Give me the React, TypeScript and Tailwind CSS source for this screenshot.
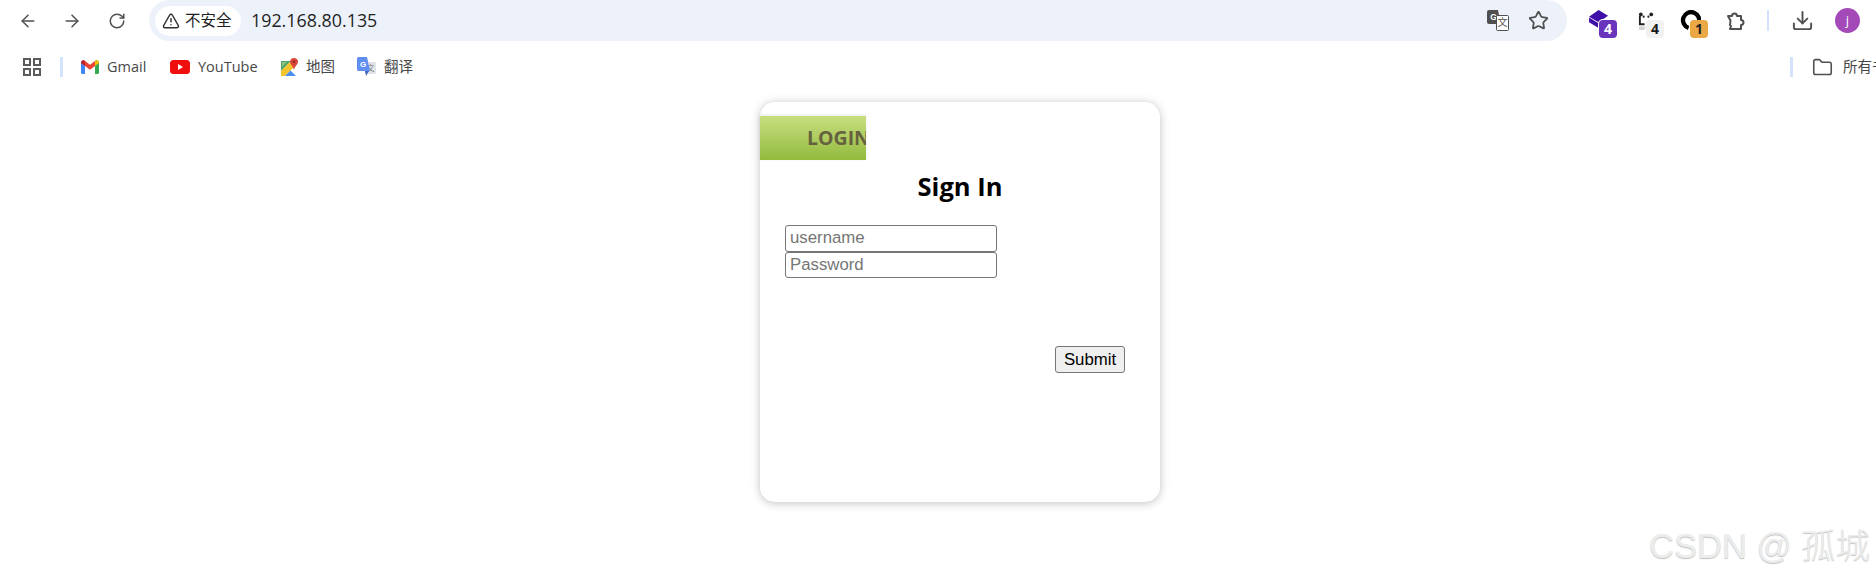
import { ArrowLeft, ArrowRight, Download, Folder, RotateCw, Star, TriangleAlert } from 'lucide-react';

const uiFont = "font-['Open_Sans','Noto_Sans_CJK_SC',sans-serif]";

function AppsIcon() {
  return (
    <svg width="18" height="18" viewBox="0 0 18 18" fill="none" stroke="#5b5b5b" strokeWidth="2">
      <rect x="1" y="1" width="6" height="6" />
      <rect x="11" y="1" width="6" height="6" />
      <rect x="1" y="11" width="6" height="6" />
      <rect x="11" y="11" width="6" height="6" />
    </svg>
  );
}

function GmailIcon() {
  return (
    <svg width="18" height="14" viewBox="0 0 18 14">
      <path d="M0 2.500C0 .6 2-.5 3.500.6L4 1v13H1.200C.5 14 0 13.500 0 12.800z" fill="#4285f4" />
      <path d="M14 1l.5-.4C16-.5 18 .6 18 2.500v10.300c0 .7-.5 1.200-1.200 1.200H14z" fill="#34a853" />
      <path d="M4 1l5 3.800L14 1v5L9 9.800 4 6z" fill="#ea4335" />
      <path d="M14 1l.5-.4C16-.5 18 .6 18 2.500V3l-4 3z" fill="#fbbc04" />
      <path d="M0 2.500C0 .6 2-.5 3.500.6L4 1v5L0 3z" fill="#c5221f" />
    </svg>
  );
}

function YoutubeIcon() {
  return (
    <svg width="20" height="14" viewBox="0 0 20 14">
      <rect width="20" height="14" rx="3.500" fill="#f00f0f" />
      <path d="M8 4l5 3-5 3z" fill="#fff" />
    </svg>
  );
}

function MapsIcon() {
  return (
    <svg width="18" height="19" viewBox="0 0 18 19">
      <path d="M0 3h10L0 13z" fill="#4ea45e" />
      <path d="M0 13L10 3h1l2 6-9 9H0z" fill="#f5c32c" />
      <path d="M4 18l5.500-5.500L15 18z" fill="#4e8df0" />
      <path d="M1 4h5L1 9z" fill="#8cc08a" />
      <path d="M13 0c2.500 0 4 1.800 4 3.800C17 6.500 14 8 13 12c-1-4-4-5.500-4-8.200C9 1.800 10.500 0 13 0z" fill="#d8473a" />
      <circle cx="13" cy="3.800" r="1.300" fill="#8f2a22" />
    </svg>
  );
}

function TranslateBookmarkIcon() {
  return (
    <svg width="19" height="20" viewBox="0 0 19 20">
      <rect x="8" y="5" width="11" height="12" rx="1" fill="#e1e3e6" />
      <text x="13.500" y="14" fontSize="8" fill="#7b7f85" textAnchor="middle" fontFamily="Noto Sans CJK SC, sans-serif">文</text>
      <path d="M1.500 0H10l3 14H1.500A1.500 1.500 0 0 1 0 12.500v-11A1.500 1.500 0 0 1 1.500 0z" fill="#5f8ff0" />
      <path d="M8 14h4l-3 5z" fill="#3f66c4" />
      <text x="6" y="10" fontSize="8" fontWeight="700" fill="#fff" textAnchor="middle" fontFamily="Liberation Sans, sans-serif">G</text>
    </svg>
  );
}

function TranslatePageIcon() {
  return (
    <svg width="22" height="21" viewBox="0 0 22 21">
      <path d="M2 0h9l1 5h2v9H2a2 2 0 0 1-2-2V2a2 2 0 0 1 2-2z" fill="#505050" />
      <text x="6.500" y="10" fontSize="8.500" fontWeight="700" fill="#fff" textAnchor="middle" fontFamily="Liberation Sans, sans-serif">G</text>
      <rect x="9.500" y="5.500" width="12" height="15" rx="1" fill="#fff" stroke="#505050" />
      <text x="15.500" y="16" fontSize="10" fill="#505050" textAnchor="middle" fontFamily="Noto Sans CJK SC, sans-serif">文</text>
    </svg>
  );
}

function PuzzleIcon() {
  return (
    <svg width="20" height="20" viewBox="0 0 20 20" fill="none" stroke="#505050" strokeWidth="2" strokeLinejoin="round">
      <path d="M2 5h4a2.500 2.500 0 0 1 5 0h4v4a2.500 2.500 0 0 1 0 5v4H4l1-3-1-1 .5-4.500z" />
    </svg>
  );
}

function PandaIcon() {
  return (
    <svg className="mt-[5px]" width="17" height="18" viewBox="0 0 18 19">
      <circle cx="3" cy="2.500" r="2" fill="#222" />
      <circle cx="14" cy="2.500" r="2" fill="#222" />
      <circle cx="6" cy="5" r="1.200" fill="#333" />
      <circle cx="11" cy="5" r="1.200" fill="#333" />
      <path d="M1 4h2v8h4v2H1z" fill="#222" />
      <path d="M1 15.500h7v1H1zM1 17.500h6v1H1z" fill="#aaa" />
    </svg>
  );
}

function Badge({ text, className }: { text: string; className: string }) {
  return (
    <span className={'absolute top-[13px] flex h-[18px] w-[18px] items-center justify-center rounded-[4px] text-[14px] font-bold leading-none ' + className}>
      {text}
    </span>
  );
}

function ExtensionIcons() {
  return (
    <div className="flex items-center">
      <div className="relative ml-[22px] h-[28px] w-[28px]">
        <svg className="mt-[3px]" width="21" height="19" viewBox="0 0 22 20">
          <path d="M0 7l10-7 10 6-10 7z" fill="#3f10a8" />
          <path d="M0 8v5l10 6 5-3v-5l-5 3z" fill="#3f10a8" />
        </svg>
        <Badge text="4" className="left-[10px] bg-[#6a35bd] text-white ring-1 ring-white" />
      </div>
      <div className="relative ml-[21px] h-[28px] w-[28px]">
        <PandaIcon />
        <Badge text="4" className="left-[8px] bg-[#f1f1f1] text-[#1a1a1a]" />
      </div>
      <div className="relative ml-[14px] h-[28px] w-[28px]">
        <svg className="mt-[3px]" width="21" height="21" viewBox="0 0 22 22" fill="none" stroke="#000" strokeWidth="4.500">
          <path d="M19.500 14A8.500 8.500 0 1 0 9 18.800" />
        </svg>
        <Badge text="1" className="left-[10px] bg-[#eaa945] text-[#222]" />
      </div>
    </div>
  );
}

function Toolbar() {
  return (
    <div className="flex h-[41px] items-center text-[#1f1f1f]">
      <ArrowLeft className="ml-[18px]" size={20} color="#505050" strokeWidth={1.800} />
      <ArrowRight className="ml-[24px]" size={20} color="#505050" strokeWidth={1.800} />
      <RotateCw className="ml-[26px]" size={18} color="#505050" strokeWidth={2} />
      <div className="ml-[23px] flex h-[41px] w-[1418px] items-center rounded-full bg-[#edf2fa]">
        <div className="ml-[6px] flex h-[30px] w-[86px] items-center rounded-full bg-white">
          <TriangleAlert className="ml-[7px]" size={18} color="#303030" strokeWidth={2} />
          <span className="ml-[5px] text-[15.500px]">不安全</span>
        </div>
        <span className="ml-[10px] text-[17.850px]">192.168.80.135</span>
        <div className="ml-auto flex items-center">
          <TranslatePageIcon />
          <Star className="ml-[19px]" size={21} color="#505050" strokeWidth={2} />
          <div className="w-[18px]" />
        </div>
      </div>
      <ExtensionIcons />
      <div className="ml-[18px]">
        <PuzzleIcon />
      </div>
      <div className="ml-[21px] h-[21px] w-[2px] bg-[#d3e3fd]" />
      <Download className="ml-[22px]" size={23} color="#505050" strokeWidth={2} />
      <div className="ml-[21px] flex h-[25px] w-[25px] items-center justify-center rounded-full bg-[#a349b8] text-[13px] text-white">j</div>
    </div>
  );
}

function Bookmarks() {
  return (
    <div className="flex h-[47px] items-center overflow-hidden whitespace-nowrap pt-[5px] text-[14.500px] text-[#474747]">
      <div className="ml-[23px]">
        <AppsIcon />
      </div>
      <div className="ml-[19px] h-[20px] w-[3px] bg-[#d3e3fd]" />
      <div className="ml-[18px]">
        <GmailIcon />
      </div>
      <span className="ml-[8px] w-[42px]">Gmail</span>
      <div className="ml-[21px]">
        <YoutubeIcon />
      </div>
      <span className="ml-[8px] w-[60px]">YouTube</span>
      <div className="ml-[23px]">
        <MapsIcon />
      </div>
      <span className="ml-[7px] w-[30px]">地图</span>
      <div className="ml-[21px]">
        <TranslateBookmarkIcon />
      </div>
      <span className="ml-[8px] w-[30px]">翻译</span>
      <div className="ml-auto flex w-[86px] flex-none items-center">
        <div className="h-[20px] w-[3px] flex-none bg-[#d3e3fd]" />
        <Folder className="ml-[19px] flex-none" size={21} color="#505050" strokeWidth={1.800} />
        <span className="ml-[10px] flex-none">所有书签</span>
      </div>
    </div>
  );
}

function LoginCard() {
  return (
    <div className="ml-[760px] mt-[14px] h-[400px] w-[400px] rounded-[15px] bg-white pt-[14px] shadow-[0_1px_10px_rgba(0,0,0,0.25)]">
      <div className="flex h-[44px] w-[106px] items-center overflow-hidden whitespace-nowrap bg-gradient-to-b from-[#c8de7e] to-[#93bb3d] pl-[47px] text-[19.500px] font-bold text-[#66623f] shadow-[0_-1px_3px_rgba(0,0,0,0.1)]">
        LOGIN
      </div>
      <h1 className="mt-[10px] text-center text-[25.500px] font-bold leading-[33px] text-black">Sign In</h1>
      <form className="font-['Liberation_Sans',sans-serif] text-[16.800px]">
        <div className="ml-[25px] mt-[22px] flex w-[212px] flex-col">
          <input className="h-[27px] w-full rounded-[3px] border border-[#767676] px-[4px] pb-[1px] placeholder:text-[#757575]" placeholder="username" />
          <input className="h-[26px] w-full rounded-[3px] border border-[#767676] px-[4px] pb-[1px] placeholder:text-[#757575]" placeholder="Password" type="password" />
        </div>
        <div className="mr-[35px] mt-[68px] flex justify-end">
          <button type="button" className="h-[27px] w-[70px] rounded-[3px] border border-[#767676] bg-[#efefef] text-black">
            Submit
          </button>
        </div>
      </form>
    </div>
  );
}

export default function App() {
  return (
    <div className={'relative h-[579px] w-[1876px] overflow-hidden bg-white ' + uiFont}>
      <Toolbar />
      <Bookmarks />
      <LoginCard />
      <div className="absolute bottom-[11px] right-[6px] font-['Liberation_Sans','Noto_Sans_CJK_SC',sans-serif] text-[34.500px] font-light leading-[44px] text-[#ececec] [text-shadow:0_1px_1px_rgba(0,0,0,0.25)]">
        CSDN @ 孤城
      </div>
    </div>
  );
}
